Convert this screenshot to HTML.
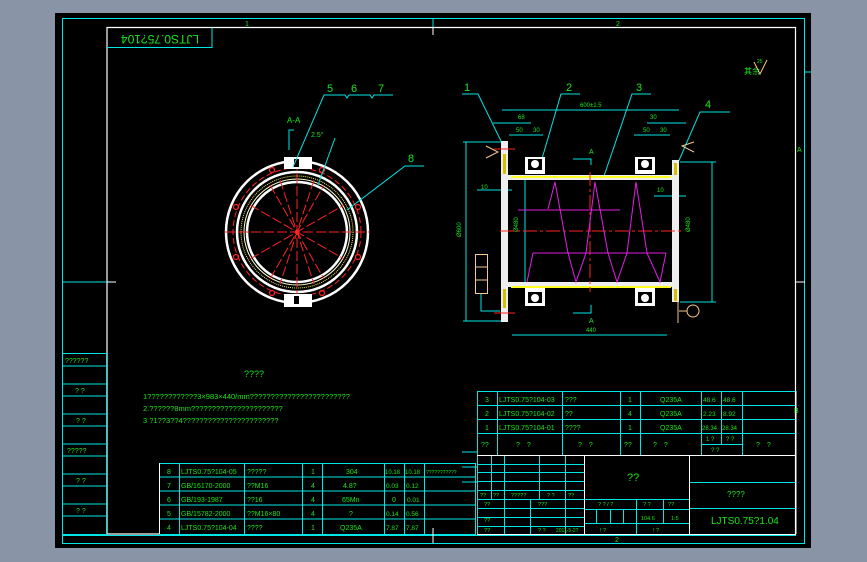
<!DOCTYPE html>
<html><head><meta charset="utf-8"><style>
html,body{margin:0;padding:0;background:#8995a6;width:867px;height:562px;overflow:hidden}
svg{display:block}
text{font-family:"Liberation Sans Narrow","Liberation Sans",sans-serif;fill:#19e619}
</style></head><body>
<svg width="867" height="562" viewBox="0 0 867 562" xmlns="http://www.w3.org/2000/svg">
<rect x="0" y="0" width="867" height="562" fill="#8995a6"/>
<rect x="55" y="13" width="756" height="535" fill="#000"/>
<rect x="62.5" y="18.5" width="742" height="525" fill="none" stroke="#00e5e5" stroke-width="1"/>
<line x1="433" y1="18" x2="433" y2="33" stroke="#00e5e5"/>
<polyline points="159,534 107,534 107,27.5 795.5,27.5 795.5,534" fill="none" stroke="#fff" stroke-width="1.2"/>
<line x1="433" y1="27" x2="433" y2="35" stroke="#fff"/>
<text x="245" y="26" font-size="7">1</text><text x="616" y="26" font-size="7">2</text>
<polyline points="107,47.5 212,47.5 212,27.5" fill="none" stroke="#00e5e5"/>
<text x="160" y="43" font-size="12" text-anchor="middle" transform="rotate(180 160 39)">LJTS0.75?104</text>
<line x1="805" y1="72" x2="811" y2="72" stroke="#00e5e5"/>
<text x="797" y="152" font-size="7">A</text>
<text x="794" y="413" font-size="7">B</text>
<line x1="62" y1="282" x2="107" y2="282" stroke="#00e5e5"/>
<line x1="107" y1="282" x2="116" y2="282" stroke="#fff"/>
<line x1="796" y1="282" x2="805" y2="282" stroke="#fff"/>
<g stroke="#00e5e5" fill="none">
<rect x="62.5" y="353.5" width="44" height="181"/>
<line x1="62" y1="366" x2="107" y2="366"/><line x1="62" y1="384" x2="107" y2="384"/>
<line x1="62" y1="396" x2="107" y2="396"/><line x1="62" y1="414" x2="107" y2="414"/>
<line x1="62" y1="426" x2="107" y2="426"/><line x1="62" y1="444" x2="107" y2="444"/>
<line x1="62" y1="456" x2="107" y2="456"/><line x1="62" y1="474" x2="107" y2="474"/>
<line x1="62" y1="486" x2="107" y2="486"/><line x1="62" y1="504" x2="107" y2="504"/>
<line x1="62" y1="516" x2="107" y2="516"/>
</g>
<g font-size="7">
<text x="65" y="363">??????</text><text x="75" y="393">? ?</text><text x="76" y="423">? ?</text>
<text x="67" y="453">?????</text><text x="76" y="483">? ?</text><text x="76" y="513">? ?</text>
</g>
<text x="744" y="74" font-size="8">其余</text>
<polyline points="754,62 760,74 767,60" fill="none" stroke="#f5c78a"/>
<text x="757" y="63" font-size="5">25</text>

<!-- circle view -->
<g>
<circle cx="297" cy="232" r="71" fill="none" stroke="#fff" stroke-width="2.5"/>
<circle cx="297" cy="232" r="64" fill="none" stroke="#f22" stroke-dasharray="6,3"/>
<circle cx="297" cy="232" r="60" fill="none" stroke="#fff" stroke-width="2.5"/>
<circle cx="297" cy="232" r="56" fill="none" stroke="#ee6" stroke-width="1" stroke-dasharray="1,1"/>
<circle cx="297" cy="232" r="53" fill="none" stroke="#ffc" stroke-width="1"/>
<circle cx="297" cy="232" r="50" fill="none" stroke="#fff" stroke-width="2.5"/>
<g stroke="#f22" stroke-width="1" stroke-dasharray="10,3">
<line x1="225" y1="232" x2="369" y2="232"/><line x1="297" y1="160" x2="297" y2="304"/>
<line x1="250" y1="205" x2="344" y2="259"/><line x1="250" y1="259" x2="344" y2="205"/>
<line x1="270" y1="185" x2="324" y2="279"/><line x1="270" y1="279" x2="324" y2="185"/>
<line x1="280" y1="180" x2="314" y2="284"/><line x1="314" y1="180" x2="280" y2="284"/>
</g>
<g fill="#fff"><rect x="284" y="157" width="28" height="12"/><rect x="284" y="294" width="28" height="13"/></g>
<g fill="#000"><rect x="294" y="159" width="5" height="8"/><rect x="294" y="296" width="5" height="8"/></g>
<g fill="none" stroke="#f22" stroke-width="1.2">
<circle cx="272" cy="170" r="2.5"/><circle cx="322" cy="170" r="2.5"/><circle cx="236" cy="207" r="2.5"/><circle cx="358" cy="207" r="2.5"/>
<circle cx="236" cy="257" r="2.5"/><circle cx="358" cy="257" r="2.5"/><circle cx="272" cy="293" r="2.5"/><circle cx="322" cy="293" r="2.5"/>
</g>
<circle cx="297" cy="232" r="2" fill="#f22"/>
</g>
<g stroke="#00e5e5" fill="none">
<polyline points="293,167 324,95 345,95 347,98 349,95 370,95 372,98 374,95 393,95"/>
<polyline points="318,185 335,138"/>
<polyline points="347,210 405,166 424,166"/>
<polyline points="289,150 289,130 294,130"/>
</g>
<g font-size="11"><text x="327" y="92">5</text><text x="351" y="92">6</text><text x="378" y="92">7</text><text x="408" y="162">8</text></g>
<text x="287" y="123" font-size="8">A-A</text>
<text x="311" y="137" font-size="7">2.5°</text>

<!-- side view -->
<g stroke="#00e5e5" fill="none">
<polyline points="462,94 478,94 501,141"/><text x="464" y="91" font-size="11" stroke="none">1</text>
<polyline points="580,94 561,94 541,162"/><text x="566" y="91" font-size="11" stroke="none">2</text>
<polyline points="651,94 632,94 604,176"/><text x="636" y="91" font-size="11" stroke="none">3</text>
<polyline points="730,112 700,112 677,165"/><text x="705" y="108" font-size="11" stroke="none">4</text>
<line x1="502" y1="110" x2="679" y2="110"/>
<line x1="493" y1="123" x2="531" y2="123"/><line x1="647" y1="123" x2="686" y2="123"/>
<line x1="509" y1="135" x2="543" y2="135"/><line x1="634" y1="135" x2="670" y2="135"/>
<line x1="463" y1="142" x2="501" y2="142"/><line x1="463" y1="321" x2="501" y2="321"/>
<line x1="466" y1="142" x2="466" y2="321"/>
<line x1="512" y1="335" x2="667" y2="335"/>
<line x1="712" y1="162" x2="712" y2="302"/><line x1="680" y1="162" x2="716" y2="162"/><line x1="680" y1="302" x2="716" y2="302"/>
<line x1="477" y1="190" x2="512" y2="190"/><line x1="654" y1="196" x2="686" y2="196"/>
<line x1="525" y1="180" x2="525" y2="282"/>
</g>
<g font-size="6">
<text x="580" y="107">600±1.5</text><text x="518" y="119">68</text><text x="650" y="119">30</text>
<text x="516" y="132">50</text><text x="533" y="132">30</text><text x="643" y="132">50</text><text x="660" y="132">30</text>
<text x="481" y="189">10</text><text x="657" y="192">10</text>
<text x="586" y="332">440</text>
<text x="461" y="237" transform="rotate(-90 461 237)">Ø600</text>
<text x="518" y="232" transform="rotate(-90 518 232)">Ø480</text>
<text x="690" y="232" transform="rotate(-90 690 232)">Ø480</text>
</g>
<g fill="#eee">
<rect x="501" y="141" width="7" height="181"/><rect x="672" y="160" width="7" height="142"/>
<rect x="507" y="175" width="166" height="5"/><rect x="507" y="282" width="166" height="5"/>
</g>
<g fill="#d4c000"><rect x="503" y="154" width="3" height="20"/><rect x="503" y="289" width="3" height="19"/>
<rect x="674" y="163" width="3" height="12"/><rect x="674" y="289" width="3" height="12"/></g>
<rect x="511" y="176" width="160" height="2" fill="#ff2"/><rect x="511" y="286" width="160" height="2" fill="#ff2"/>
<g fill="#fff"><rect x="525" y="157" width="20" height="17"/><rect x="635" y="157" width="20" height="17"/>
<rect x="525" y="288" width="20" height="18"/><rect x="635" y="288" width="20" height="18"/></g>
<g fill="#000"><rect x="528" y="159" width="14" height="11"/><rect x="638" y="159" width="14" height="11"/>
<rect x="528" y="292" width="14" height="11"/><rect x="638" y="292" width="14" height="11"/></g>
<g fill="#fff"><circle cx="535" cy="164" r="4"/><circle cx="645" cy="164" r="4"/><circle cx="535" cy="298" r="4"/><circle cx="645" cy="298" r="4"/></g>
<line x1="500" y1="231" x2="682" y2="231" stroke="#f22" stroke-dasharray="14,3,3,3"/>
<line x1="590" y1="172" x2="590" y2="292" stroke="#f22" stroke-dasharray="14,3,3,3"/>
<g stroke="#e21ee2" fill="none" stroke-width="1">
<polyline points="548,209 555,182 568,253 576,282 586,253 595,182 608,253 617,282 627,253 636,182 647,253 660,282 666,253"/>
<polyline points="518,210 620,210"/><polyline points="533,253 666,253"/>
<polyline points="533,253 527,282"/>
</g>
<g stroke="#00e5e5" fill="none"><polyline points="573,159 591,159 591,165"/><polyline points="573,313 591,313 591,305"/></g>
<text x="589" y="154" font-size="7">A</text><text x="589" y="323" font-size="7">A</text>
<rect x="475.5" y="254.5" width="12" height="39" fill="none" stroke="#f5c78a"/>
<line x1="475" y1="267" x2="488" y2="267" stroke="#f5c78a"/><line x1="475" y1="280" x2="488" y2="280" stroke="#f5c78a"/>
<polyline points="481,294 481,311 500,311" fill="none" stroke="#00e5e5"/>
<polyline points="486,146 498,152 486,158" fill="none" stroke="#f5c78a"/>
<polyline points="694,142 682,146 694,152" fill="none" stroke="#f5c78a"/>
<circle cx="693" cy="311" r="6" fill="none" stroke="#f5c78a"/>
<line x1="679" y1="311" x2="687" y2="311" stroke="#f5c78a"/>
<line x1="678" y1="300" x2="678" y2="323" stroke="#f5c78a"/>
<line x1="494" y1="149" x2="515" y2="149" stroke="#f22"/><line x1="494" y1="313" x2="515" y2="313" stroke="#f22"/>

<text x="244" y="377" font-size="9">????</text>
<g font-size="7.5">
<text x="143" y="399">1????????????3×983×440/mm????????????????????????</text>
<text x="143" y="411">2.??????8mm??????????????????????</text>
<text x="143" y="423">3 ?1??3??4???????????????????????</text>
</g>

<g stroke="#00e5e5" fill="none">
<rect x="159.5" y="463.5" width="316" height="71"/>
<line x1="159" y1="477" x2="476" y2="477"/><line x1="159" y1="491" x2="476" y2="491"/>
<line x1="159" y1="505" x2="476" y2="505"/><line x1="159" y1="519" x2="476" y2="519"/>
<line x1="179.5" y1="463" x2="179.5" y2="534"/><line x1="244.5" y1="463" x2="244.5" y2="534"/>
<line x1="302.5" y1="463" x2="302.5" y2="534"/><line x1="322.5" y1="463" x2="322.5" y2="534"/>
<line x1="384.5" y1="463" x2="384.5" y2="534"/><line x1="404.5" y1="463" x2="404.5" y2="534"/>
<line x1="424.5" y1="463" x2="424.5" y2="534"/>
<line x1="62" y1="535.5" x2="796" y2="535.5"/>
</g>
<line x1="159.5" y1="463" x2="159.5" y2="534" stroke="#fff"/>
<g font-size="7">
<text x="167" y="474">8</text><text x="181" y="474">LJTS0.75?104-05</text><text x="247" y="474">?????</text><text x="311" y="474">1</text><text x="346" y="474">304</text><text x="385" y="474" font-size="6">10.18</text><text x="405" y="474" font-size="6">10.18</text><text x="426" y="474" font-size="5">???????????</text>
<text x="167" y="488">7</text><text x="181" y="488">GB/16170-2000</text><text x="247" y="488">??M16</text><text x="311" y="488">4</text><text x="343" y="488">4.8?</text><text x="386" y="488" font-size="6.5">0.03</text><text x="406" y="488" font-size="6.5">0.12</text>
<text x="167" y="502">6</text><text x="181" y="502">GB/193-1987</text><text x="247" y="502">??16</text><text x="311" y="502">4</text><text x="342" y="502">65Mn</text><text x="392" y="502">0</text><text x="407" y="502" font-size="6.5">0.01</text>
<text x="167" y="516">5</text><text x="181" y="516">GB/15782-2000</text><text x="247" y="516">??M16×80</text><text x="311" y="516">4</text><text x="349" y="516">?</text><text x="386" y="516" font-size="6.5">0.14</text><text x="406" y="516" font-size="6.5">0.56</text>
<text x="167" y="530">4</text><text x="181" y="530">LJTS0.75?104-04</text><text x="247" y="530">????</text><text x="311" y="530">1</text><text x="340" y="530">Q235A</text><text x="386" y="530" font-size="6.5">7.87</text><text x="406" y="530" font-size="6.5">7.87</text>
</g>
<line x1="433" y1="528" x2="433" y2="543" stroke="#fff"/>

<g stroke="#00e5e5" fill="none">
<line x1="477" y1="391.5" x2="796" y2="391.5"/><line x1="477" y1="405.5" x2="796" y2="405.5"/>
<line x1="477" y1="419.5" x2="796" y2="419.5"/><line x1="477" y1="433.5" x2="796" y2="433.5"/>
<line x1="702" y1="444.5" x2="742" y2="444.5"/>
<line x1="477.5" y1="391" x2="477.5" y2="535"/><line x1="497.5" y1="391" x2="497.5" y2="455"/>
<line x1="562.5" y1="391" x2="562.5" y2="455"/><line x1="620.5" y1="391" x2="620.5" y2="455"/>
<line x1="640.5" y1="391" x2="640.5" y2="455"/><line x1="701.5" y1="391" x2="701.5" y2="455"/>
<line x1="721.5" y1="391" x2="721.5" y2="444"/><line x1="742.5" y1="391" x2="742.5" y2="455"/>
<line x1="477" y1="464.5" x2="584" y2="464.5"/><line x1="477" y1="472.5" x2="584" y2="472.5"/>
<line x1="477" y1="481.5" x2="584" y2="481.5"/><line x1="477" y1="490.5" x2="584" y2="490.5"/>
<line x1="477" y1="499.5" x2="689" y2="499.5"/><line x1="477" y1="508.5" x2="584" y2="508.5"/>
<line x1="477" y1="517.5" x2="584" y2="517.5"/><line x1="477" y1="526.5" x2="584" y2="526.5"/>
<line x1="584" y1="509.5" x2="689" y2="509.5"/><line x1="584" y1="523.5" x2="689" y2="523.5"/>
<line x1="491.5" y1="455" x2="491.5" y2="499"/><line x1="504.5" y1="455" x2="504.5" y2="535"/>
<line x1="539.5" y1="455" x2="539.5" y2="499"/><line x1="530.5" y1="499" x2="530.5" y2="535"/>
<line x1="565.5" y1="455" x2="565.5" y2="535"/>
<line x1="596.5" y1="509" x2="596.5" y2="523"/><line x1="610.5" y1="509" x2="610.5" y2="523"/><line x1="623.5" y1="509" x2="623.5" y2="523"/>
<line x1="636.5" y1="499" x2="636.5" y2="535"/><line x1="663.5" y1="499" x2="663.5" y2="523"/>
<line x1="689" y1="482.5" x2="796" y2="482.5"/><line x1="689" y1="508.5" x2="796" y2="508.5"/>
<line x1="462" y1="452" x2="477" y2="452"/><line x1="462" y1="467" x2="477" y2="467"/><line x1="462" y1="482" x2="477" y2="482"/>
</g>
<g stroke="#fff" fill="none">
<line x1="477" y1="455.5" x2="796" y2="455.5"/>
<line x1="584.5" y1="455" x2="584.5" y2="535"/><line x1="689.5" y1="455" x2="689.5" y2="535"/>
<line x1="477" y1="534.5" x2="796" y2="534.5"/>
<line x1="796" y1="391" x2="796" y2="534"/>
</g>
<g font-size="7">
<text x="485" y="402">3</text><text x="499" y="402">LJTS0.75?104-03</text><text x="565" y="402">???</text><text x="628" y="402">1</text><text x="660" y="402">Q235A</text><text x="703" y="402" font-size="6.5">48.6</text><text x="723" y="402" font-size="6.5">48.6</text>
<text x="485" y="416">2</text><text x="499" y="416">LJTS0.75?104-02</text><text x="565" y="416">??</text><text x="628" y="416">4</text><text x="660" y="416">Q235A</text><text x="703" y="416" font-size="6.5">2.23</text><text x="723" y="416" font-size="6.5">8.92</text>
<text x="485" y="430">1</text><text x="499" y="430">LJTS0.75?104-01</text><text x="565" y="430">????</text><text x="628" y="430">1</text><text x="660" y="430">Q235A</text><text x="702" y="430" font-size="6">28.34</text><text x="722" y="430" font-size="6">28.34</text>
<text x="481" y="447">??</text><text x="516" y="447">?　?</text><text x="578" y="447">?　?</text><text x="624" y="447">??</text><text x="653" y="447">?　?</text>
<text x="706" y="441" font-size="6">1 ?</text><text x="726" y="441" font-size="6">? ?</text><text x="711" y="452" font-size="6">? ?</text><text x="756" y="447">?　?</text>
<text x="627" y="481" font-size="11">??</text>
<text x="727" y="497" font-size="8">????</text>
<text x="711" y="524" font-size="10">LJTS0.75?1.04</text>
</g>
<g font-size="5.5">
<text x="480" y="497">??</text><text x="493" y="497">??</text><text x="511" y="497">?????</text><text x="547" y="497">? ?</text><text x="568" y="497">??</text>
<text x="484" y="506">??</text><text x="538" y="506">???</text><text x="598" y="506">? ? / ?</text><text x="643" y="506">? ?</text><text x="668" y="506">??</text>
<text x="484" y="522">??</text><text x="641" y="520">104.6</text><text x="671" y="520">1:5</text>
<text x="484" y="532">??</text><text x="538" y="532">? ?</text><text x="556" y="532" font-size="5">2011-5-2?</text><text x="600" y="532">! ?</text><text x="653" y="532">! ?</text>
</g>
<text x="615" y="542" font-size="7">2</text>
</svg>
</body></html>
